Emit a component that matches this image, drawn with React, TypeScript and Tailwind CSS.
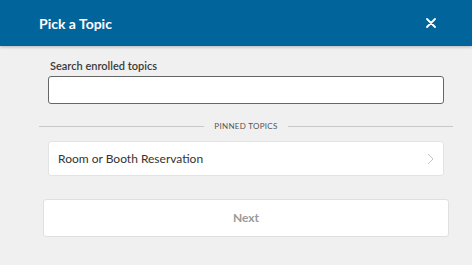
import React from "react";

export default function App() {
  return (
    <div
      className="w-[472px] h-[265px] bg-[#f0f0f0] overflow-hidden flex flex-col"
      style={{ fontFamily: "Lato, 'Noto Sans', sans-serif" }}
    >
      <div className="h-[46px] shrink-0 bg-[#01659b] flex items-center justify-between pl-[39px] pr-[36px] shadow-[0_1px_3px_rgba(0,0,0,0.25)] relative z-10">
        <span className="text-white text-[14px] font-bold">Pick a Topic</span>
        <svg width="10" height="10" viewBox="0 0 10 10" className="text-white">
          <path d="M1 1 L9 9 M9 1 L1 9" stroke="currentColor" strokeWidth="1.8" strokeLinecap="round" />
        </svg>
      </div>
      <div className="flex flex-col px-[39px] pr-[19px]">
        <div className="px-[9px] pt-[13px]">
          <label className="block text-[11px] font-semibold text-[#3a3a3a] leading-[14px] pl-[2px]">
            Search enrolled topics
          </label>
          <input
            className="mt-[3px] block w-full h-[28px] bg-white border border-[#666] rounded-[3px] outline-none"
            style={{ fontFamily: "inherit" }}
          />
        </div>
        <div className="flex items-center mt-[17px] gap-[10px]">
          <div className="flex-1 h-px bg-[#c8c8c8]" />
          <span className="text-[8px] text-[#555] tracking-[0.3px] leading-[10px]">PINNED TOPICS</span>
          <div className="flex-1 h-px bg-[#c8c8c8]" />
        </div>
      </div>
      <div className="pl-[48px] pr-[28px] mt-[10px]">
        <div className="h-[35px] bg-white border border-[#e3e3e3] rounded-[3px] flex items-center justify-between pl-[9px] pr-[9px]">
          <span className="text-[12px] text-[#333]">Room or Booth Reservation</span>
          <svg width="7" height="12" viewBox="0 0 7 12">
            <path d="M1 1 L6 6 L1 11" fill="none" stroke="#c4c4c4" strokeWidth="1" />
          </svg>
        </div>
      </div>
      <div className="pl-[43px] pr-[23px] mt-[23px]">
        <button
          className="w-full h-[38px] bg-white border border-[#e0e0e0] rounded-[3px] text-[12px] font-bold text-[#9a9a9a]"
          style={{ fontFamily: "inherit" }}
        >
          Next
        </button>
      </div>
    </div>
  );
}
